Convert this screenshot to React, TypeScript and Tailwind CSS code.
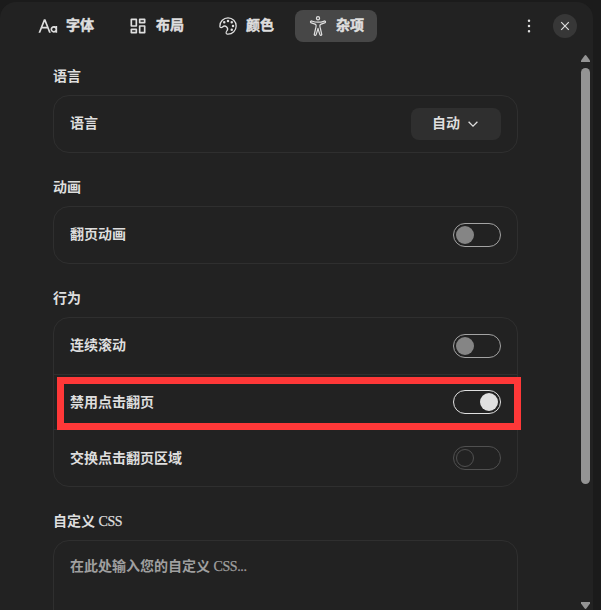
import React from 'react';
import { RiFontSize, RiDashboardLine } from 'react-icons/ri';
import { VscSymbolColor } from 'react-icons/vsc';
import { IoAccessibilityOutline } from 'react-icons/io5';
import { PiDotsThreeVerticalBold } from 'react-icons/pi';

type ToggleState = 'off' | 'on' | 'disabled';

const tabs = [
  { label: '字体', icon: RiFontSize, active: false },
  { label: '布局', icon: RiDashboardLine, active: false },
  { label: '颜色', icon: VscSymbolColor, active: false },
  { label: '杂项', icon: IoAccessibilityOutline, active: true },
];

function Toggle({ state }: { state: ToggleState }) {
  const track =
    state === 'on'
      ? 'justify-end border-[#e0e0e0]'
      : state === 'off'
        ? 'border-[#a3a3a3]'
        : 'border-[#505050]';
  const knob =
    state === 'on'
      ? 'bg-[#e0e0e0]'
      : state === 'off'
        ? 'bg-[#858585]'
        : 'border border-[#505050]';
  return (
    <div className={`flex h-6 w-12 items-center rounded-full border px-0.5 ${track}`}>
      <div className={`size-[18px] rounded-full ${knob}`} />
    </div>
  );
}

function Row({ label, low, children }: { label: string; low?: boolean; children: React.ReactNode }) {
  return (
    <div className="flex h-14 items-center justify-between px-4">
      <span className={low ? 'mt-0.5' : ''}>{label}</span>
      {children}
    </div>
  );
}

function Section({ title, children }: { title: React.ReactNode; children: React.ReactNode }) {
  return (
    <section className="mb-6">
      <h2 className="mb-[7px] h-[22px] leading-[22px]">{title}</h2>
      {children}
    </section>
  );
}

const card = 'rounded-2xl border border-[#2f2f2f]';
const latin = 'font-normal tracking-[-0.4px] [-webkit-text-stroke:0.25px_currentColor]';

export default function App() {
  return (
    <div className="h-[610px] w-[601px] overflow-hidden bg-[#1b1b1b] pt-0.5 font-['Liberation_Serif','Noto_Sans_CJK_SC',sans-serif] text-sm font-bold text-[#dedede]">
      <div className="flex h-[608px] w-[593px] flex-col rounded-t-2xl bg-[#222222]">
        <header className="flex h-12 shrink-0 items-center pl-[25px] pr-4">
          <nav className="flex gap-2">
            {tabs.map(({ label, icon: Icon, active }) => (
              <div
                key={label}
                className={`flex h-8 w-[82px] items-center gap-2 rounded-lg pl-[13px] ${active ? 'bg-[#474747]' : ''}`}
              >
                <Icon className="size-5 shrink-0" />
                <span className="leading-5 [-webkit-text-stroke:0.5px_currentColor]">{label}</span>
              </div>
            ))}
          </nav>
          <PiDotsThreeVerticalBold className="ml-auto size-5" />
          <div className="ml-3.5 flex size-6 items-center justify-center rounded-full bg-[#373737]">
            <svg viewBox="0 0 10 10" className="size-2.5" fill="none" stroke="currentColor" strokeWidth="1.2">
              <path d="M1.2 1.2l7.6 7.6M8.8 1.2L1.2 8.8" />
            </svg>
          </div>
        </header>
        <div className="flex min-h-0 flex-1">
          <main className="w-[521px] overflow-hidden pl-[53px] pr-[3px] pt-4">
            <Section title="语言">
              <div className={card}>
                <Row label="语言">
                  <div className="flex h-8 w-[90px] items-center gap-2 rounded-lg bg-[#2f2f2f] pl-[21px]">
                    <span>自动</span>
                    <svg viewBox="0 0 10 6" className="h-1.5 w-2.5" fill="none" stroke="currentColor" strokeWidth="1.3">
                      <path d="M.6 .7L5 5.1 9.4 .7" />
                    </svg>
                  </div>
                </Row>
              </div>
            </Section>
            <Section title="动画">
              <div className={card}>
                <Row label="翻页动画">
                  <Toggle state="off" />
                </Row>
              </div>
            </Section>
            <Section title="行为">
              <div className={`relative h-[170px] ${card}`}>
                <Row label="连续滚动">
                  <Toggle state="off" />
                </Row>
                <div className="border-y border-[#2f2f2f]">
                  <div className="-my-px">
                    <Row label="禁用点击翻页" low>
                      <Toggle state="on" />
                    </Row>
                  </div>
                </div>
                <Row label="交换点击翻页区域" low>
                  <Toggle state="disabled" />
                </Row>
                <div className="absolute left-[3px] top-[59px] h-[53px] w-[464px] border-[7px] border-[#ff3838]" />
              </div>
            </Section>
            <Section title={<>自定义 <span className={latin}>CSS</span></>}>
              <div className={`h-32 px-4 pt-4 text-[#9f9f9f] ${card}`}>
                在此处输入您的自定义 <span className={latin}>CSS...</span>
              </div>
            </Section>
          </main>
          <div className="ml-auto mr-[3px] flex w-[9px] flex-col items-center pt-[5px] text-[#949494]">
            <svg viewBox="0 0 9 7" className="h-[7px] w-[9px]" fill="currentColor">
              <path d="M0 7V5.5L3.5.7Q4.5-.6 5.5.7L9 5.5V7z" />
            </svg>
            <div className="mt-1.5 h-[416px] w-full rounded-full bg-[#949494]" />
            <svg viewBox="0 0 9 7" className="mb-[1px] mt-auto h-[7px] w-[9px]" fill="currentColor">
              <path d="M0 0V1.5L3.5 6.3Q4.5 7.6 5.5 6.3L9 1.5V0z" />
            </svg>
          </div>
        </div>
      </div>
    </div>
  );
}
